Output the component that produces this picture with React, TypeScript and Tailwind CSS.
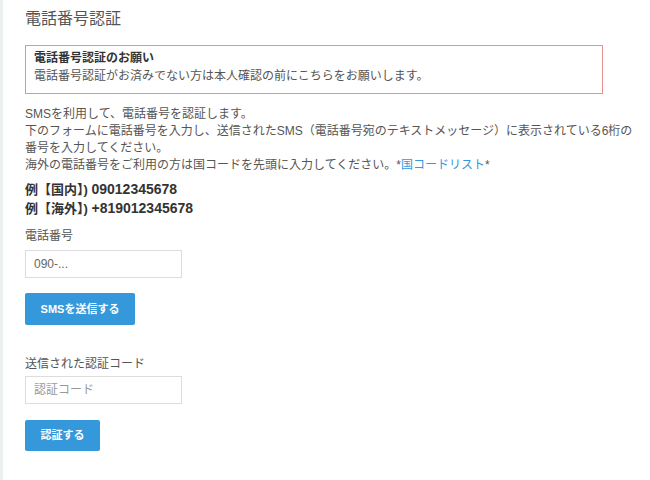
export default function App() {
  const font = { fontFamily: '"Liberation Sans", "Noto Sans CJK JP", sans-serif' };
  return (
    <div className="flex min-h-[480px] w-[650px] bg-white text-[#555]" style={font}>
      <div className="w-[3px] shrink-0 bg-[#edf0f0]" />
      <div className="w-[600px] pl-[22px]">
        <h1 className="mt-[8px] text-[16px] leading-[22px] text-[#555]">電話番号認証</h1>

        <div className="mt-[15px] border border-[#e8918d] pb-[8px] pl-[8px] pt-[3px] text-[12px] leading-[18px]">
          <p className="font-bold text-[#333]">電話番号認証のお願い</p>
          <p>電話番号認証がお済みでない方は本人確認の前にこちらをお願いします。</p>
        </div>

        <div className="mt-[12px] w-[615px] text-[12px] leading-[17px]">
          <p>SMSを利用して、電話番号を認証します。</p>
          <p>
            下のフォームに電話番号を入力し、送信されたSMS（電話番号宛のテキストメッセージ）に表示されている6桁の番号を入力してください。
          </p>
          <p>
            海外の電話番号をご利用の方は国コードを先頭に入力してください。*
            <a className="text-[#3498db]">国コードリスト</a>*
          </p>
        </div>

        <div className="mt-[6px] text-[13px] font-bold leading-[18px] text-[#333]">
          <p>
            例【国内】) <span className="text-[14px]">09012345678</span>
          </p>
          <p>
            例【海外】) <span className="text-[14px]">+819012345678</span>
          </p>
        </div>

        <label className="mt-[10px] block text-[12px] leading-[17px]">電話番号</label>
        <input
          className="mt-[5px] block h-[28px] w-[157px] border border-[#ddd] px-[8px] text-[12px] outline-none placeholder:text-[#666]"
          placeholder="090-..."
        />
        <button className="mt-[15px] block h-[32px] w-[110px] rounded-[2px] bg-[#3498db] text-[11px] font-semibold text-white">
          SMSを送信する
        </button>

        <label className="mt-[31px] block text-[12px] leading-[17px]">送信された認証コード</label>
        <input
          className="mt-[3px] block h-[28px] w-[157px] border border-[#ddd] px-[8px] text-[12px] outline-none placeholder:text-[#999]"
          placeholder="認証コード"
        />
        <button className="mt-[16px] block h-[31px] w-[75px] rounded-[2px] bg-[#3498db] text-[11px] font-semibold text-white">
          認証する
        </button>
      </div>
    </div>
  );
}
